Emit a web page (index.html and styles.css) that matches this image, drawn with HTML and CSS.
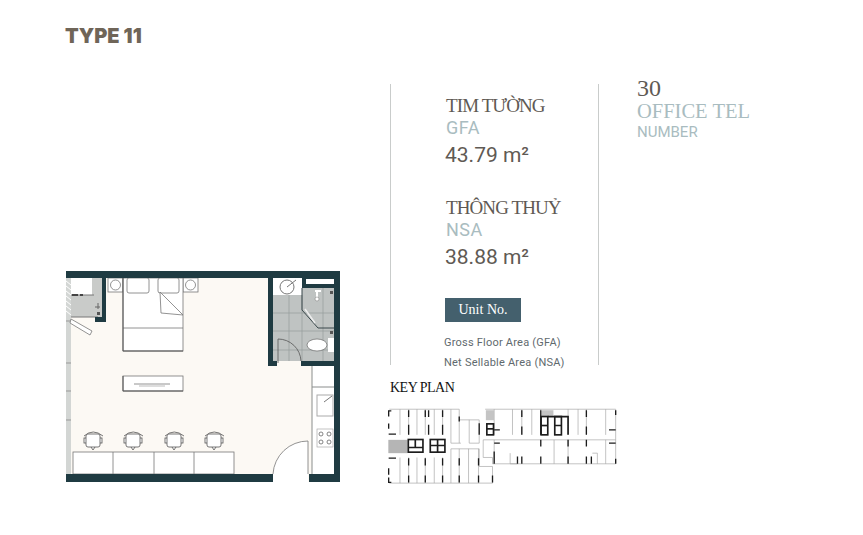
FILE: index.html
```html
<!DOCTYPE html>
<html lang="vi">
<head>
  <meta charset="UTF-8">
  <meta name="viewport" content="width=device-width, initial-scale=1.0">
  <title>Type 11</title>
  <link rel="stylesheet" href="styles.css">
</head>
<body>
  <div class="sheet">
    <div class="left">
      <h1 class="type-title">TYPE 11</h1>
      <svg class="floor-plan" viewBox="0 0 276 212" width="276" height="212">
        <rect x="1" y="0" width="274" height="211" fill="#fcf9f4"/>
        <!-- closet -->
        <rect x="6" y="7" width="31" height="39" fill="#c9cbc9"/>
        <rect x="6" y="7" width="21" height="17" fill="#fff"/>
        <path d="M6 24H29M6 46H33" stroke="#777" fill="none"/>
        <path d="M7 24H13M15 24H18" stroke="#444" stroke-width="2" fill="none"/>
        <path d="M30 36H35M33 32V38" stroke="#666" fill="none"/>
        <rect x="32" y="41" width="3" height="3" fill="#555"/>
        <rect x="1" y="7" width="5" height="196" fill="#d3d6d4"/>
        <path d="M1 10L6 14M1 15L6 19M1 20L6 24M1 25L6 29M1 30L6 34M1 35L6 39M1 40L6 44" stroke="#fff"/>
        <path d="M1 50H6M1 92H6M1 120H6M1 149H6" stroke="#999"/>
        <path d="M6 48L27 60L25 64L5 52Z" fill="#fff" stroke="#777" stroke-width=".8"/>
        <!-- bathroom -->
        <rect x="208" y="7" width="61" height="83" fill="#bfc3c2"/>
        <path d="M224 24V90M237 24V90M258 17V90M208 42H269M208 60H269M208 79H269" stroke="#969b9b" stroke-width=".7" fill="none"/>
        <rect x="208" y="7" width="29" height="17" fill="#fff"/>
        <circle cx="222" cy="16" r="7" fill="#fff" stroke="#777"/>
        <path d="M222 16L231 9" stroke="#777"/>
        <rect x="237" y="7" width="32" height="10" fill="#1f3b42"/>
        <rect x="241" y="8" width="28" height="5" fill="#fff"/>
        <path d="M237 17V39L253 57H269" stroke="#39474a" fill="none"/>
        <path d="M240 38L250 52" stroke="#eee" stroke-width="1.500" fill="none"/>
        <rect x="263" y="67" width="6" height="14" fill="#fff"/>
        <ellipse cx="252" cy="74" rx="10" ry="6" fill="#fff" stroke="#555" stroke-width=".6"/>
        <path d="M250 20H256M252 20V27" stroke="#fff" stroke-width="2" fill="none"/>
        <circle cx="252" cy="28" r="2" fill="#fff" stroke="#777" stroke-width=".5"/>
        <rect x="265" y="20" width="3" height="3" fill="#555"/>
        <rect x="265" y="60" width="3" height="3" fill="#555"/>
        <path d="M213 68V92M213 68A23 23 0 0 1 236 90" stroke="#555" fill="none" stroke-width=".8"/>
        <!-- furniture -->
        <g fill="#fff" stroke="#777" stroke-width=".8">
          <rect x="43" y="7" width="15" height="14"/>
          <circle cx="50.500" cy="14" r="5"/>
          <rect x="118" y="7" width="15" height="14"/>
          <circle cx="125.500" cy="14" r="5"/>
          <rect x="58" y="7" width="60" height="73"/>
          <rect x="62" y="7" width="22" height="15" rx="2"/>
          <rect x="93" y="7" width="21" height="15" rx="2"/>
          <path d="M95 21L118 44L96 42Z"/>
          <path d="M58 57H118"/>
          <rect x="58" y="105" width="60" height="15"/>
          <path d="M69 113H105"/>
          <path d="M74 115H100" stroke="#aaa"/>
          <rect x="8" y="181" width="161" height="22"/>
          <path d="M48 181V203M89 181V203M129 181V203"/>
        </g>
        <path d="M58 7V80H118M58 105V120H118" fill="none" stroke="#555" stroke-width="1"/>
        <g fill="#fff" stroke="#555" stroke-width=".8">
          <g id="chair">
            <path d="M19 165Q28 157 38 165" fill="none"/>
            <rect x="19" y="167" width="3" height="5"/>
            <rect x="34" y="167" width="3" height="5"/>
            <path d="M26 176L28 179L30 176"/>
            <rect x="21" y="163" width="14" height="13" rx="2"/>
          </g>
          <use href="#chair" x="40"/>
          <use href="#chair" x="81"/>
          <use href="#chair" x="121"/>
        </g>
        <!-- kitchen -->
        <rect x="247" y="95" width="22" height="108" fill="#fff"/>
        <path d="M247 95V203M247 116H269" stroke="#8a8d8c" fill="none"/>
        <rect x="252" y="124" width="16" height="21" fill="#fff" stroke="#aaa"/>
        <path d="M259 131L267 125" stroke="#777"/>
        <rect x="252" y="158" width="16" height="18" fill="#fff" stroke="#aaa" stroke-width=".7"/>
        <g fill="#fff" stroke="#666" stroke-width=".8">
          <circle cx="256" cy="163" r="2"/>
          <circle cx="264" cy="163" r="2"/>
          <circle cx="256" cy="171" r="2"/>
          <circle cx="264" cy="171" r="2"/>
        </g>
        <!-- walls -->
        <g fill="#1f3b42">
          <rect x="1" y="0" width="274" height="7"/>
          <rect x="269" y="0" width="6" height="211"/>
          <rect x="1" y="203" width="207" height="8"/>
          <rect x="244" y="203" width="31" height="8"/>
          <rect x="203" y="7" width="5" height="88"/>
          <rect x="203" y="90" width="9" height="5"/>
          <rect x="236" y="90" width="39" height="5"/>
          <rect x="37" y="7" width="4" height="44"/>
          <rect x="30" y="46" width="11" height="5"/>
        </g>
        <!-- entry door -->
        <path d="M208 211V203A35 35 0 0 1 243 170V211Z" fill="#fff"/>
        <path d="M208 203A35 35 0 0 1 243 170V203" fill="none" stroke="#777" stroke-width=".8"/>
      </svg>
    </div>

    <div class="middle">
      <div class="specs">
        <div class="area">
          <h2 class="area-name">TIM TƯỜNG</h2>
          <div class="area-code">GFA</div>
          <div class="area-value">43.79 m²</div>
        </div>
        <div class="area">
          <h2 class="area-name">THÔNG THUỶ</h2>
          <div class="area-code">NSA</div>
          <div class="area-value">38.88 m²</div>
        </div>
        <div class="unit-tag">Unit No.</div>
        <p class="legend">Gross Floor Area (GFA)</p>
        <p class="legend">Net Sellable Area (NSA)</p>
      </div>
      <h3 class="key-title">KEY PLAN</h3>
      <svg class="key-plan" viewBox="20 110 700 230" width="233" height="77">
        <rect x="27" y="205" width="58" height="40" fill="#b5b5b5"/>
        <rect x="320" y="116" width="24" height="30" fill="#c4c4c4"/>
        <rect x="488" y="116" width="35" height="18" fill="#c4c4c4"/>
        <g fill="none" stroke="#a5a5a5" stroke-width="2">
          <path d="M30 113H240M62 113V190M88 113V190M113 113V190M138 113V190M165 113V190M190 113V190M215 113V215H245M240 113V215"/>
          <path d="M30 335H340M62 258V335M88 258V335M113 258V335M138 258V335M165 258V335M190 258V335M215 232V335M240 232V335M268 232V335M298 232V335M340 285V335M215 232H300V285H340"/>
          <path d="M240 145H300V215H270V145"/>
          <path d="M318 113H710M345 113V190M400 113V190M428 113V190M458 113V190M485 113V190M567 113V190M597 113V190M622 113V190M680 113V190M710 113V277"/>
          <path d="M312 205H710M312 205V258H340V277H710M345 205V277M393 245V277H415M640 245H655V277M525 205V277M567 205V277M680 205V277"/>
        </g>
        <g fill="none" stroke="#1c1c1c" stroke-width="4">
          <path d="M28 135V118H36M28 172V156M28 188H50M28 260H50M28 290V310M28 318V333H36"/>
          <path d="M88 116V136M88 160V190M138 116V136M148 116V136M148 160V190M190 116V136M190 160V190M240 135V150"/>
          <path d="M88 260V282M88 312V333M138 260V282M138 312V333M190 260V282M190 312V333M240 260V282M240 312V333M298 260V282M298 312V333M340 312V333"/>
          <path d="M300 155V190M345 175H362M428 116V136M428 165V190M485 116V190M622 116V136M622 165V190M710 116V130M710 175H690"/>
          <path d="M345 215H362M345 240V277M415 255V277M428 255V277M485 205V225M485 255V277M567 205V225M567 255V277M622 205V225M622 255V277M637 255V277M690 215H710M710 262V277"/>
        </g>
        <g fill="none" stroke="#1c1c1c" stroke-width="5">
          <rect x="87" y="204" width="44" height="38"/>
          <path d="M108 204V228H131M87 228H108"/>
          <rect x="153" y="204" width="44" height="38"/>
          <path d="M175 204V242M153 222H197"/>
          <rect x="323" y="157" width="20" height="33"/>
          <path d="M323 172H343"/>
          <rect x="486" y="135" width="20" height="55"/>
          <path d="M486 162H506"/>
          <rect x="527" y="135" width="20" height="55"/>
          <path d="M527 162H547M506 135H567V190"/>
        </g>
      </svg>
    </div>

    <div class="right">
      <div class="count">30</div>
      <div class="unit-kind">OFFICE TEL</div>
      <div class="unit-label">NUMBER</div>
    </div>
  </div>
</body>
</html>
```

FILE: styles.css
```css
* {
  box-sizing: border-box;
}

body {
  margin: 0;
  background: #fff;
  font-family: "Roboto", sans-serif;
}

.sheet {
  display: flex;
  width: 863px;
  height: 535px;
  padding-left: 65px;
  overflow: hidden;
}

/* left column */
.left {
  width: 325px;
  display: flex;
  flex-direction: column;
}

.type-title {
  margin: 25px 0 0;
  font-family: "Inter", sans-serif;
  font-size: 20px;
  line-height: 23px;
  font-weight: 900;
  color: #6f6558;
}

.floor-plan {
  display: block;
  margin-top: 223px;
}

/* middle column */
.middle {
  width: 247px;
  padding-top: 84px;
}

.specs {
  width: 209px;
  height: 281px;
  padding: 10px 0 0 54px;
  border-left: 1px solid #c9cccb;
  border-right: 1px solid #c9cccb;
}

.area {
  height: 102px;
}

.area-name {
  margin: 0 0 0 1px;
  font-family: "Liberation Serif", serif;
  font-size: 19px;
  line-height: 23px;
  font-weight: 400;
  letter-spacing: -.9px;
  color: #5f5a54;
}

.area-code {
  margin-left: 1px;
  font-size: 18px;
  line-height: 22px;
  letter-spacing: .5px;
  color: #a9bcc0;
}

.area-value {
  margin-top: 2px;
  font-size: 21px;
  line-height: 29px;
  color: #5f5a54;
}

.unit-tag {
  width: 76px;
  height: 24px;
  margin: 0 0 11px;
  background: #44606d;
  color: #fff;
  font-family: "Liberation Serif", serif;
  font-size: 14px;
  line-height: 24px;
  text-align: center;
}

.legend {
  margin: 0 0 0 -1px;
  font-size: 11px;
  line-height: 20px;
  letter-spacing: .22px;
  color: #5f6a6e;
}

.key-title {
  margin: 15px 0 0;
  font-family: "Liberation Serif", serif;
  font-size: 14px;
  line-height: 16px;
  font-weight: 400;
  letter-spacing: -.5px;
  color: #111;
}

.key-plan {
  display: block;
  margin: 12px 0 0 -4px;
}

/* right column */
.right {
  padding-top: 76px;
}

.count {
  font-family: "Liberation Serif", serif;
  font-size: 24px;
  line-height: 24px;
  color: #5f5a54;
}

.unit-kind {
  font-family: "Liberation Serif", serif;
  font-size: 20.500px;
  line-height: 22px;
  color: #a9bcc0;
}

.unit-label {
  font-size: 15px;
  line-height: 20px;
  color: #a9bcc0;
}
```
